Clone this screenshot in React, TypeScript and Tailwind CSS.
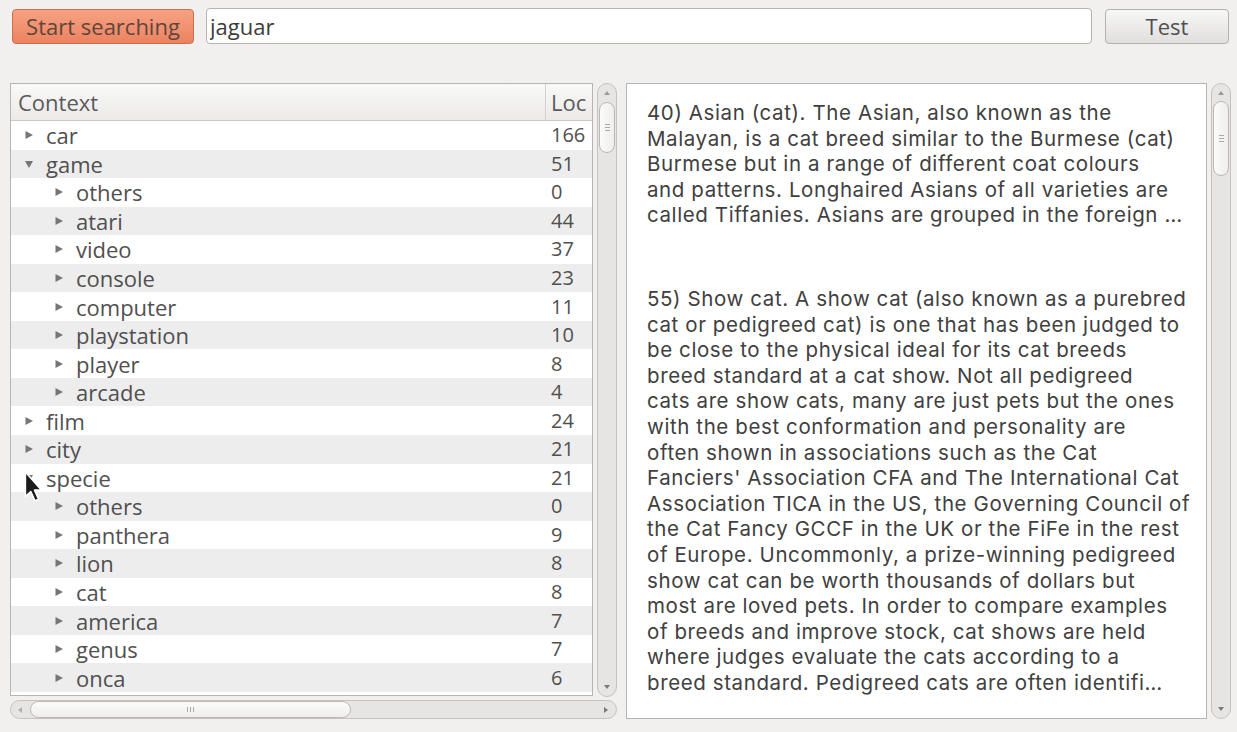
import { useState } from "react";

type Row = { label: string; count: number; level: number; open?: boolean };

const rows: Row[] = [
  { label: "car", count: 166, level: 0 },
  { label: "game", count: 51, level: 0, open: true },
  { label: "others", count: 0, level: 1 },
  { label: "atari", count: 44, level: 1 },
  { label: "video", count: 37, level: 1 },
  { label: "console", count: 23, level: 1 },
  { label: "computer", count: 11, level: 1 },
  { label: "playstation", count: 10, level: 1 },
  { label: "player", count: 8, level: 1 },
  { label: "arcade", count: 4, level: 1 },
  { label: "film", count: 24, level: 0 },
  { label: "city", count: 21, level: 0 },
  { label: "specie", count: 21, level: 0, open: true },
  { label: "others", count: 0, level: 1 },
  { label: "panthera", count: 9, level: 1 },
  { label: "lion", count: 8, level: 1 },
  { label: "cat", count: 8, level: 1 },
  { label: "america", count: 7, level: 1 },
  { label: "genus", count: 7, level: 1 },
  { label: "onca", count: 6, level: 1 },
];

const first = [
  "40) Asian (cat). The Asian, also known as the",
  "Malayan, is a cat breed similar to the Burmese (cat)",
  "Burmese but in a range of different coat colours",
  "and patterns. Longhaired Asians of all varieties are",
  "called Tiffanies. Asians are grouped in the foreign …",
];

const second = [
  "55) Show cat. A show cat (also known as a purebred",
  "cat or pedigreed cat) is one that has been judged to",
  "be close to the physical ideal for its cat breeds",
  "breed standard at a cat show. Not all pedigreed",
  "cats are show cats, many are just pets but the ones",
  "with the best conformation and personality are",
  "often shown in associations such as the Cat",
  "Fanciers' Association CFA and The International Cat",
  "Association TICA in the US, the Governing Council of",
  "the Cat Fancy GCCF in the UK or the FiFe in the rest",
  "of Europe. Uncommonly, a prize-winning pedigreed",
  "show cat can be worth thousands of dollars but",
  "most are loved pets. In order to compare examples",
  "of breeds and improve stock, cat shows are held",
  "where judges evaluate the cats according to a",
  "breed standard. Pedigreed cats are often identifi…",
];

const font = { fontFamily: '"Open Sans", "Noto Sans", sans-serif' };
const bodyFont = { fontFamily: 'Inter, "Open Sans", sans-serif' };

function Arrow({ open }: { open?: boolean }) {
  return (
    <svg width="10" height="10" viewBox="0 0 10 10" className="shrink-0">
      {open ? <path d="M1 2 L9 2 L5 9 Z" fill="#767676" /> : <path d="M1.5 1 L9 5 L1.5 9 Z" fill="#767676" />}
    </svg>
  );
}

function VScroll({ thumbTop, thumbH }: { thumbTop: number; thumbH: number }) {
  return (
    <div className="relative w-[20px] h-full rounded-[10px] border border-[#c4c3c1] bg-[#e6e5e3]">
      <svg width="6" height="4" viewBox="0 0 6 4" className="absolute left-[6px] top-[7px]">
        <path d="M0 4 L3 0 L6 4 Z" fill="#9a9a9a" />
      </svg>
      <div
        className="absolute left-[1px] right-[1px] rounded-[9px] border border-[#b9b8b6] bg-gradient-to-r from-[#fbfbfa] to-[#efeeed] flex items-center justify-center"
        style={{ top: thumbTop, height: thumbH }}
      >
        <div className="flex flex-col gap-[2px]">
          <div className="w-[5px] h-px bg-[#a9a9a9]" />
          <div className="w-[5px] h-px bg-[#a9a9a9]" />
          <div className="w-[5px] h-px bg-[#a9a9a9]" />
        </div>
      </div>
      <svg width="6" height="4" viewBox="0 0 6 4" className="absolute left-[6px] bottom-[7px]">
        <path d="M0 0 L3 4 L6 0 Z" fill="#7a7a7a" />
      </svg>
    </div>
  );
}

function HScroll() {
  return (
    <div className="relative h-[19px] w-full rounded-[10px] border border-[#c4c3c1] bg-[#e6e5e3]">
      <svg width="4" height="6" viewBox="0 0 4 6" className="absolute left-[7px] top-[6px]">
        <path d="M4 0 L0 3 L4 6 Z" fill="#b0b0b0" />
      </svg>
      <div className="absolute top-[0px] bottom-[0px] left-[19px] w-[321px] rounded-[9px] border border-[#b9b8b6] bg-gradient-to-b from-[#fbfbfa] to-[#efeeed] flex items-center justify-center">
        <div className="flex gap-[2px]">
          <div className="w-px h-[5px] bg-[#a9a9a9]" />
          <div className="w-px h-[5px] bg-[#a9a9a9]" />
          <div className="w-px h-[5px] bg-[#a9a9a9]" />
        </div>
      </div>
      <svg width="4" height="6" viewBox="0 0 4 6" className="absolute right-[8px] top-[6px]">
        <path d="M0 0 L4 3 L0 6 Z" fill="#7a7a7a" />
      </svg>
    </div>
  );
}

export default function App() {
  const [query, setQuery] = useState("jaguar");

  return (
    <div className="w-[1237px] h-[732px] bg-[#f1f0ef] flex flex-col px-[10px] overflow-hidden text-[#505050]" style={font}>
      <div className="flex items-center h-[36px] mt-[8px] gap-[12px]">
        <button className="ml-[2px] w-[182px] h-[35px] rounded-[4px] border border-[#c7714f] bg-gradient-to-b from-[#f6a283] to-[#ec8260] text-[22px] text-[#5e463c] leading-none pb-[1px]">
          Start searching
        </button>
        <input
          value={query}
          onChange={(e) => setQuery(e.target.value)}
          className="flex-1 h-[36px] rounded-[4px] border border-[#b5b4b2] bg-white px-[3px] text-[22px] text-[#3c3c3c] outline-none"
        />
        <button className="ml-[1px] w-[124px] h-[35px] mr-[-2px] rounded-[4px] border border-[#b3b2b0] bg-gradient-to-b from-[#f7f7f6] to-[#e0dfdd] text-[22px] text-[#505050] leading-none pb-[1px]">
          Test
        </button>
      </div>

      <div className="flex mt-[39px] gap-[9px]">
        <div className="flex flex-col w-[607px] gap-[3px]">
          <div className="flex gap-[4px] h-[614px]">
            <div className="relative w-[583px] h-[613px] border border-[#b6b5b3] bg-white">
              <div className="flex h-[37px] border-b border-[#c9c8c6] bg-gradient-to-b from-[#f9f9f8] to-[#ebeae9] text-[22px] text-[#5a5a5a]">
                <div className="w-[535px] border-r border-[#d2d1cf] pl-[7px] flex items-center">Context</div>
                <div className="flex-1 pl-[5px] flex items-center overflow-hidden whitespace-nowrap">Loc</div>
              </div>
              {rows.map((r, i) => (
                <div key={i} className={`flex items-center h-[28.55px] ${i % 2 === 1 ? "bg-[#ededed]" : "bg-white"}`}>
                  <div className={`flex items-center w-[540px] gap-[12px] ${r.level === 0 ? "pl-[13px]" : "pl-[43px]"}`}>
                    <Arrow open={r.open} />
                    <span className="leading-none text-[22px]">{r.label}</span>
                  </div>
                  <span className="leading-none text-[20px]">{r.count}</span>
                </div>
              ))}
              <svg width="24" height="34" viewBox="0 0 20 28" className="absolute left-[12px] top-[386px]">
                <path d="M2 1.5 L2 22 L6.5 17.8 L10 25.5 L13 24.2 L9.6 16.6 L15.5 16.6 Z" fill="#1c1c1c" stroke="#ffffff" strokeWidth="1.3" strokeLinejoin="round" />
              </svg>
            </div>
            <VScroll thumbTop={18} thumbH={51} />
          </div>
          <HScroll />
        </div>

        <div className="flex gap-[4px] h-[636px]">
          <div className="w-[581px] h-full border border-[#b6b5b3] bg-white pl-[20px] pt-[16px] text-[20.5px] leading-[25.6px] tracking-[0.6px] text-[#404040] whitespace-nowrap overflow-hidden" style={bodyFont}>
            <div>
              {first.map((l, i) => (
                <div key={i}>{l}</div>
              ))}
            </div>
            <div className="mt-[58px]">
              {second.map((l, i) => (
                <div key={i}>{l}</div>
              ))}
            </div>
          </div>
          <VScroll thumbTop={17} thumbH={75} />
        </div>
      </div>
    </div>
  );
}
